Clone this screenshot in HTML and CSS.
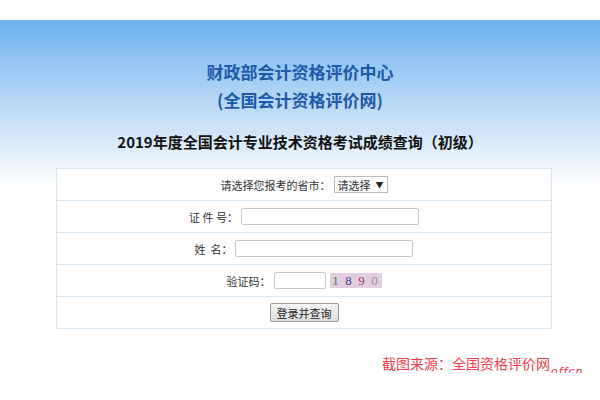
FILE: index.html
```html
<!DOCTYPE html>
<html lang="zh-CN">
<head>
    <meta charset="UTF-8">
    <meta name="viewport" content="width=device-width, initial-scale=1.0">
    <title>全国会计资格评价网 - 成绩查询</title>
    <link rel="stylesheet" href="styles.css">
</head>
<body>
    <div class="banner">
        <h1 class="site-title">财政部会计资格评价中心<br>(全国会计资格评价网)</h1>
        <h2 class="page-title">2019年度全国会计专业技术资格考试成绩查询（初级）</h2>

        <form class="query-form" onsubmit="return false;">
            <div class="form-row">
                <label for="province">请选择您报考的省市：</label>
                <span class="select-box" id="province">请选择 <span class="arrow">▼</span></span>
            </div>
            <div class="form-row">
                <label for="idNo">证 件 号：</label>
                <input type="text" id="idNo" class="input-long">
            </div>
            <div class="form-row">
                <label for="userName">姓&nbsp;&nbsp;名：</label>
                <input type="text" id="userName" class="input-long">
            </div>
            <div class="form-row">
                <label for="code">验证码：</label>
                <input type="text" id="code" class="input-short">
                <span class="captcha"><i class="c1">1</i><i class="c2">8</i><i class="c3">9</i><i class="c4">0</i></span>
            </div>
            <div class="form-row">
                <button type="submit">登录并查询</button>
            </div>
        </form>
    </div>

    <div class="source">
        <span class="source-text">截图来源：全国资格评价网<span class="mark">offcn</span></span>
    </div>
</body>
</html>
```

FILE: styles.css
```css
body {
    margin: 0;
    padding: 20px 0 0;
    background: #fff;
    font-family: "Noto Sans CJK SC", "Noto Sans", sans-serif;
    color: #333;
}
.banner {
    padding-top: 38px;
    background: linear-gradient(#6db2f0 0%, #a9d0f4 40%, #e2effb 80%, #fff 100%);
    background-size: 100% 165px;
    background-repeat: no-repeat;
}
.site-title {
    margin: 0;
    font-size: 17px;
    line-height: 28px;
    font-weight: bold;
    text-align: center;
    color: #1f5aa6;
}
.page-title {
    margin: 16px 0 14px;
    font-size: 15px;
    line-height: 24px;
    font-weight: bold;
    text-align: center;
    color: #111;
}
.query-form {
    width: 494px;
    margin-left: 56px;
    border: 1px solid #d8e7f4;
    background: #fff;
}
.form-row {
    display: flex;
    align-items: center;
    justify-content: center;
    height: 31px;
    border-bottom: 1px solid #d8e7f4;
    font-size: 11px;
    color: #333;
}
.form-row:last-child {
    border-bottom: none;
}
.form-row label {
    margin-right: 3px;
}
.select-box {
    display: inline-flex;
    align-items: center;
    height: 15px;
    padding: 0 3px;
    border: 1px solid #bbb;
    background: #fff;
    font-size: 11px;
}
.select-box .arrow {
    font-size: 8px;
    margin-left: 5px;
    color: #222;
}
input {
    height: 15px;
    padding: 0;
    border: 1px solid #c8c8c8;
    border-radius: 2px;
}
.input-long {
    width: 176px;
}
.input-short {
    width: 50px;
}
.captcha {
    display: inline-flex;
    justify-content: space-around;
    align-items: center;
    width: 52px;
    height: 15px;
    margin-left: 4px;
    background: #e3cde0;
    font-family: "Liberation Serif", serif;
    font-size: 13px;
    letter-spacing: 1px;
}
.captcha i {
    font-style: normal;
}
.c1 { color: #3d7c52; }
.c2 { color: #4a3a8c; }
.c3 { color: #a23a5a; }
.c4 { color: #8a94a0; }
button {
    height: 19px;
    padding: 0 6px;
    border: 1px solid #9a9a9a;
    border-radius: 2px;
    background: linear-gradient(#f6f6f6, #dcdcdc);
    font-family: inherit;
    font-size: 11px;
    color: #222;
}
.source {
    display: flex;
    justify-content: flex-end;
    width: 550px;
    margin-top: 24px;
}
.source-text {
    position: relative;
    font-size: 14px;
    line-height: 20px;
    color: #f0404a;
}
/* watermark sits just after the source line, a little lower */
.mark {
    position: absolute;
    left: calc(100% + 1px);
    top: 9px;
    font-family: "DejaVu Sans", sans-serif;
    font-size: 11px;
    font-style: italic;
    letter-spacing: 1px;
    color: #e83040;
}
```
